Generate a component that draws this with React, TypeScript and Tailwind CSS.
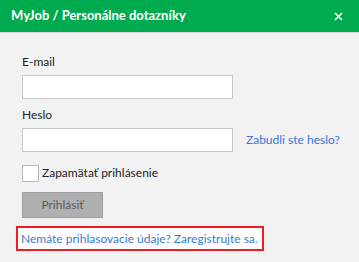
export default function App() {
  return (
    <div
      className="flex h-[262px] w-[359px] flex-col bg-[#f2f2f2] text-[12px] text-[#222]"
      style={{ fontFamily: 'Lato, "Liberation Sans", Arial, sans-serif' }}
    >
      <header className="flex h-[32px] shrink-0 items-center justify-between bg-[#00aa4e] pl-[11px] pr-[16px] text-white">
        <h1 className="text-[13px] font-bold">MyJob / Personálne dotazníky</h1>
        <svg width="9" height="9" viewBox="0 0 9 9" aria-hidden>
          <path d="M1 1 L8 8 M8 1 L1 8" stroke="white" strokeWidth="1.7" />
        </svg>
      </header>
      <div className="border-t border-[#d8d8d8]" />

      <main className="flex flex-col pl-[22px] pt-[22px]">
        <label className="leading-[14px]">E-mail</label>
        <input className="mt-[6px] h-[24px] w-[211px] border border-[#c8c8c8] bg-white" />

        <label className="mt-[9px] leading-[14px]">Heslo</label>
        <div className="mt-[6px] flex items-center gap-[13px]">
          <input
            type="password"
            className="h-[24px] w-[211px] border border-[#c8c8c8] bg-white"
          />
          <a className="text-[#3a78d8]">Zabudli ste heslo?</a>
        </div>

        <label className="mt-[12px] flex items-center gap-[3px]">
          <span className="h-[17px] w-[17px] border border-[#b8b8b8] bg-white" />
          <span>Zapamätať prihlásenie</span>
        </label>

        <button className="mt-[10px] h-[26px] w-[81px] border border-[#a0a0a0] bg-[#b0b0b0] text-[#5a5a5a]">
          Prihlásiť
        </button>

        <div className="-ml-[6px] mt-[8px] flex h-[25px] w-[248px] items-center whitespace-nowrap border-2 border-[#ee1c25] bg-white px-[3px]">
          <a className="text-[#3a78d8]">Nemáte prihlasovacie údaje? Zaregistrujte sa.</a>
        </div>
      </main>
    </div>
  );
}
